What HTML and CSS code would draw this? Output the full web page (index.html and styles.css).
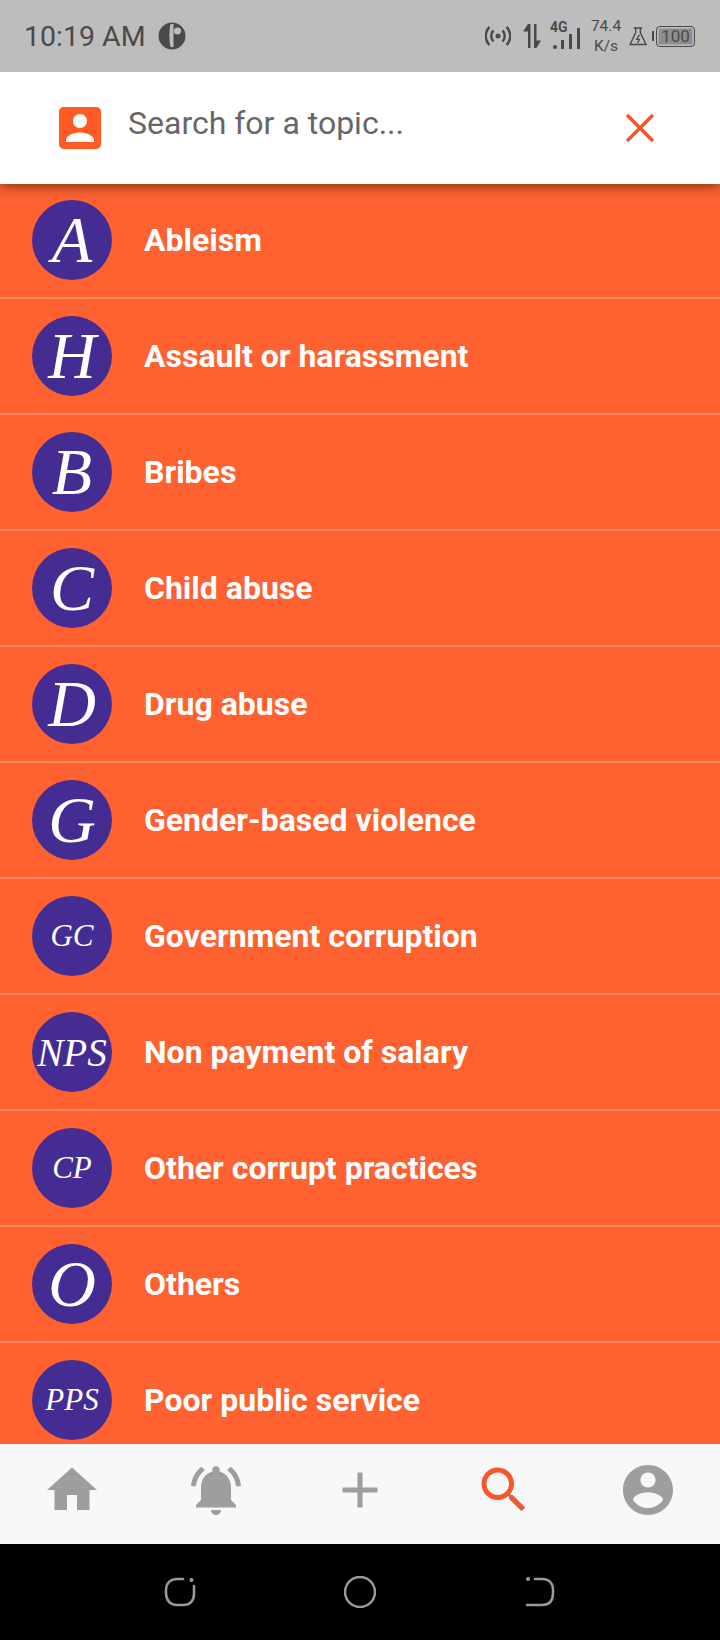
FILE: index.html
```html
<!DOCTYPE html>
<html>
    <head>
        <meta charset="UTF-8">
        <title>Search topics</title>
        <link rel="stylesheet" href="styles.css">
    </head>
    <body>
        <div class="app">
            <div class="statusBar">
                <div class="statusLeft">
                    <span class="clock">10:19 AM</span>
                    <svg class="appBadge" viewBox="0 0 28 28">
                        <circle cx="14" cy="14" r="13.5" fill="#4a4a4a"/>
                        <path d="M12.500 2h3v23h-3c-1.500-7-1.500-16 0-23z" fill="#bdbdbd"/>
                        <circle cx="19.500" cy="9" r="3.600" fill="#bdbdbd"/>
                    </svg>
                </div>
                <div class="statusRight">
                    <svg class="hotspot" viewBox="0 0 26 20" fill="none" stroke="#4a4a4a" stroke-width="2.500">
                        <circle cx="13" cy="10" r="2.500" fill="#4a4a4a" stroke="none"/>
                        <path d="M8.500 4.500c-3 3-3 8 0 11M17.500 4.500c3 3 3 8 0 11"/>
                        <path d="M4.500 1c-5 5-5 13 0 18M21.500 1c5 5 5 13 0 18"/>
                    </svg>
                    <svg class="dataArrows" viewBox="0 0 18 24" fill="#4a4a4a">
                        <path d="M5 0v24h2.500V0zM5 0L0 7.500h5zM11 0v24h2.500V0zM13.500 24L18 16.500h-4.500z"/>
                    </svg>
                    <div class="signal">
                        <span class="netType">4G</span>
                        <svg class="bars" viewBox="0 0 28 22" fill="#4a4a4a">
                            <rect x="0" y="17" width="4" height="4" rx="2"/>
                            <rect x="8" y="12" width="3" height="9"/>
                            <rect x="16" y="6" width="3" height="15"/>
                            <rect x="24" y="0" width="3" height="21"/>
                        </svg>
                    </div>
                    <div class="speed">
                        <span>74.4</span>
                        <span>K/s</span>
                    </div>
                    <svg class="flask" viewBox="0 0 20 20" fill="none" stroke="#4a4a4a" stroke-width="1.500">
                        <path d="M5 1h9M7 1v5L1 18.500h17L12 6V1z"/>
                        <path d="M11 8l-3 5h3l-2 4" stroke-width="1.300"/>
                    </svg>
                    <div class="battery">
                        <span class="batteryTip"></span>
                        <div class="batteryBody">100</div>
                    </div>
                </div>
            </div>
            <header class="searchBar">
                <svg class="accountBox" viewBox="3 3 18 18">
                    <path d="M3 5v14c0 1.100.89 2 2 2h14c1.100 0 2-.9 2-2V5c0-1.100-.9-2-2-2H5c-1.110 0-2 .9-2 2zm12 4c0 1.660-1.340 3-3 3s-3-1.340-3-3 1.340-3 3-3 3 1.340 3 3zm-9 8c0-2 4-3.100 6-3.100s6 1.100 6 3.100v1H6v-1z"/>
                </svg>
                <span class="searchHint">Search for a topic...</span>
                <svg class="closeIcon" viewBox="0 0 28 28" stroke-width="3.600">
                    <path d="M1 1l26 26M27 1L1 27"/>
                </svg>
            </header>
            <ul class="topics">
                <li class="topic"><span class="avatar big">A</span><span class="topicName">Ableism</span></li>
                <li class="topic"><span class="avatar big">H</span><span class="topicName">Assault or harassment</span></li>
                <li class="topic"><span class="avatar big">B</span><span class="topicName">Bribes</span></li>
                <li class="topic"><span class="avatar big">C</span><span class="topicName">Child abuse</span></li>
                <li class="topic"><span class="avatar big">D</span><span class="topicName">Drug abuse</span></li>
                <li class="topic"><span class="avatar big">G</span><span class="topicName">Gender-based violence</span></li>
                <li class="topic"><span class="avatar small">GC</span><span class="topicName">Government corruption</span></li>
                <li class="topic"><span class="avatar wide">NPS</span><span class="topicName">Non payment of salary</span></li>
                <li class="topic"><span class="avatar small">CP</span><span class="topicName">Other corrupt practices</span></li>
                <li class="topic"><span class="avatar big">O</span><span class="topicName">Others</span></li>
                <li class="topic"><span class="avatar small">PPS</span><span class="topicName">Poor public service</span></li>
            </ul>
            <nav class="bottomNav">
                <svg class="navIcon" viewBox="0 0 24 24"><path d="M10 20v-6h4v6h5v-8h3L12 3 2 12h3v8z"/></svg>
                <svg class="navIcon" viewBox="0 0 24 24"><path d="M7.580 4.080L6.150 2.650C3.750 4.480 2.170 7.300 2.030 10.500h2c.15-2.650 1.510-4.970 3.550-6.420zm12.390 6.420h2c-.15-3.200-1.730-6.020-4.120-7.850l-1.420 1.430c2.020 1.450 3.390 3.770 3.540 6.420zM18 11c0-3.070-1.640-5.640-4.500-6.320V4c0-.83-.67-1.500-1.500-1.500s-1.500.67-1.500 1.500v.68C7.630 5.360 6 7.920 6 11v5l-2 2v1h16v-1l-2-2v-5zm-6 11c.14 0 .27-.01.4-.04.65-.14 1.180-.58 1.440-1.180.1-.24.15-.5.15-.78h-4c.01 1.100.9 2 2.010 2z"/></svg>
                <svg class="navIcon" viewBox="0 0 24 24"><path d="M19 13h-6v6h-2v-6H5v-2h6V5h2v6h6v2z"/></svg>
                <svg class="navIcon active" viewBox="0 0 24 24"><path d="M15.500 14h-.79l-.28-.27C15.410 12.590 16 11.110 16 9.500 16 5.910 13.090 3 9.500 3S3 5.910 3 9.500 5.910 16 9.500 16c1.610 0 3.090-.59 4.230-1.570l.27.28v.79l5 4.990L20.490 19l-4.990-5zm-6 0C7.010 14 5 11.990 5 9.500S7.010 5 9.500 5 14 7.010 14 9.500 11.990 14 9.500 14z"/></svg>
                <svg class="navIcon" viewBox="0 0 24 24"><path d="M12 2C6.480 2 2 6.480 2 12s4.480 10 10 10 10-4.480 10-10S17.520 2 12 2zm0 3c1.660 0 3 1.340 3 3s-1.340 3-3 3-3-1.340-3-3 1.340-3 3-3zm0 14.200c-2.500 0-4.710-1.280-6-3.220.03-1.990 4-3.080 6-3.080 1.990 0 5.970 1.090 6 3.080-1.290 1.940-3.500 3.220-6 3.220z"/></svg>
            </nav>
            <div class="systemNav">
                <svg class="sysIcon" viewBox="0 0 32 32">
                    <path d="M19 3h-5C6.500 3 2 7 2 14v3c0 7 4 12 11 12h6c7 0 11-4 11-11V10"/>
                    <circle cx="27.500" cy="4" r="2" class="sysDot"/>
                </svg>
                <svg class="sysIcon" viewBox="0 0 32 32">
                    <circle cx="16" cy="16" r="15"/>
                </svg>
                <svg class="sysIcon" viewBox="0 0 32 32">
                    <path d="M11 3h7c7 0 11 4 11 11v3c0 8-4 12-11 12H3"/>
                    <circle cx="4" cy="3" r="2" class="sysDot"/>
                </svg>
            </div>
        </div>
    </body>
</html>
```

FILE: styles.css
```css
body{
    margin: 0;
    padding: 0;
    font-family: Roboto, "Liberation Sans", sans-serif;
}
.app{
    width: 720px;
    height: 1640px;
    display: flex;
    flex-direction: column;
    overflow: hidden;
}
.statusBar{
    height: 72px;
    flex: none;
    background-color: #BDBDBD;
    color: #4A4A4A;
    display: flex;
    justify-content: space-between;
    align-items: center;
    padding: 0 25px 0 24px;
    box-sizing: border-box;
    position: relative;
    z-index: 2;
}
.statusLeft{
    display: flex;
    align-items: center;
    gap: 12px;
}
.clock{
    font-size: 28.5px;
    line-height: 36px;
    padding-top: 2px;
}
.appBadge{
    width: 28px;
    height: 28px;
}
.statusRight{
    display: flex;
    align-items: center;
}
.hotspot{
    width: 26px;
    height: 20px;
    margin-right: 12px;
}
.dataArrows{
    width: 18px;
    height: 24px;
    margin-right: 9px;
}
.signal{
    width: 32px;
    height: 30px;
    position: relative;
    margin-right: 8px;
}
.netType{
    position: absolute;
    left: 0;
    top: -2px;
    font-size: 14px;
    font-weight: 700;
}
.bars{
    position: absolute;
    left: 3px;
    top: 7px;
    width: 28px;
    height: 22px;
}
.speed{
    display: flex;
    flex-direction: column;
    align-items: center;
    width: 32px;
    font-size: 15.5px;
    line-height: 20px;
    margin-right: 7px;
}
.flask{
    width: 19px;
    height: 19px;
    margin-right: 4px;
}
.battery{
    display: flex;
    align-items: center;
}
.batteryTip{
    width: 2px;
    height: 10px;
    background-color: #4A4A4A;
    margin-right: 2px;
}
.batteryBody{
    width: 37px;
    height: 19px;
    border: 1.500px solid #4A4A4A;
    border-radius: 4px;
    background-color: #8E8E8E;
    box-shadow: inset 0 0 0 1.500px #BDBDBD;
    font-size: 17px;
    line-height: 19px;
    text-align: center;
}
.searchBar{
    height: 112px;
    flex: none;
    background-color: #FFF;
    display: flex;
    align-items: flex-start;
    box-shadow: 0 4px 10px rgba(0, 0, 0, 0.4);
    position: relative;
    z-index: 1;
}
.accountBox{
    width: 42px;
    height: 42px;
    fill: #FF5A26;
    margin: 35px 0 0 59px;
}
.searchHint{
    font-size: 32px;
    line-height: 40px;
    color: #666;
    margin: 31px 0 0 27px;
    flex: 1;
}
.closeIcon{
    width: 28px;
    height: 28px;
    stroke: #F4582A;
    margin: 42px 66px 0 0;
}
.topics{
    flex: 1;
    min-height: 0;
    margin: -1px 0 0 0;
    padding: 0;
    list-style: none;
    background-color: #FF6230;
    overflow: hidden;
}
.topic{
    display: flex;
    align-items: center;
    gap: 32px;
    padding: 17px 0 17px 32px;
    border-bottom: 2px solid #FF8A64;
}
.avatar{
    width: 80px;
    height: 80px;
    flex: none;
    border-radius: 50%;
    background-color: #452C92;
    color: #FFF;
    font-family: "Liberation Serif", serif;
    font-style: italic;
    display: flex;
    justify-content: center;
    align-items: center;
}
.avatar.big{
    font-size: 66px;
}
.avatar.wide{
    font-size: 39px;
}
.avatar.small{
    font-size: 31px;
}
.topicName{
    color: #FFF;
    font-size: 32px;
    font-weight: 700;
    line-height: 38px;
}
.bottomNav{
    height: 100px;
    flex: none;
    background-color: #F8F8F8;
    display: grid;
    grid-template-columns: repeat(5, 1fr);
    justify-items: center;
    align-items: center;
    padding-bottom: 8px;
    box-sizing: border-box;
}
.navIcon{
    width: 60px;
    height: 60px;
    fill: #9E9E9E;
}
.navIcon.active{
    fill: #F4582A;
}
.systemNav{
    height: 96px;
    flex: none;
    background-color: #000;
    display: flex;
    justify-content: center;
    align-items: center;
    gap: 148px;
}
.sysIcon{
    width: 32px;
    height: 32px;
    fill: none;
    stroke: #9A9A9A;
    stroke-width: 2.500;
    stroke-linecap: round;
}
.sysDot{
    fill: #9A9A9A;
    stroke: none;
}
```
